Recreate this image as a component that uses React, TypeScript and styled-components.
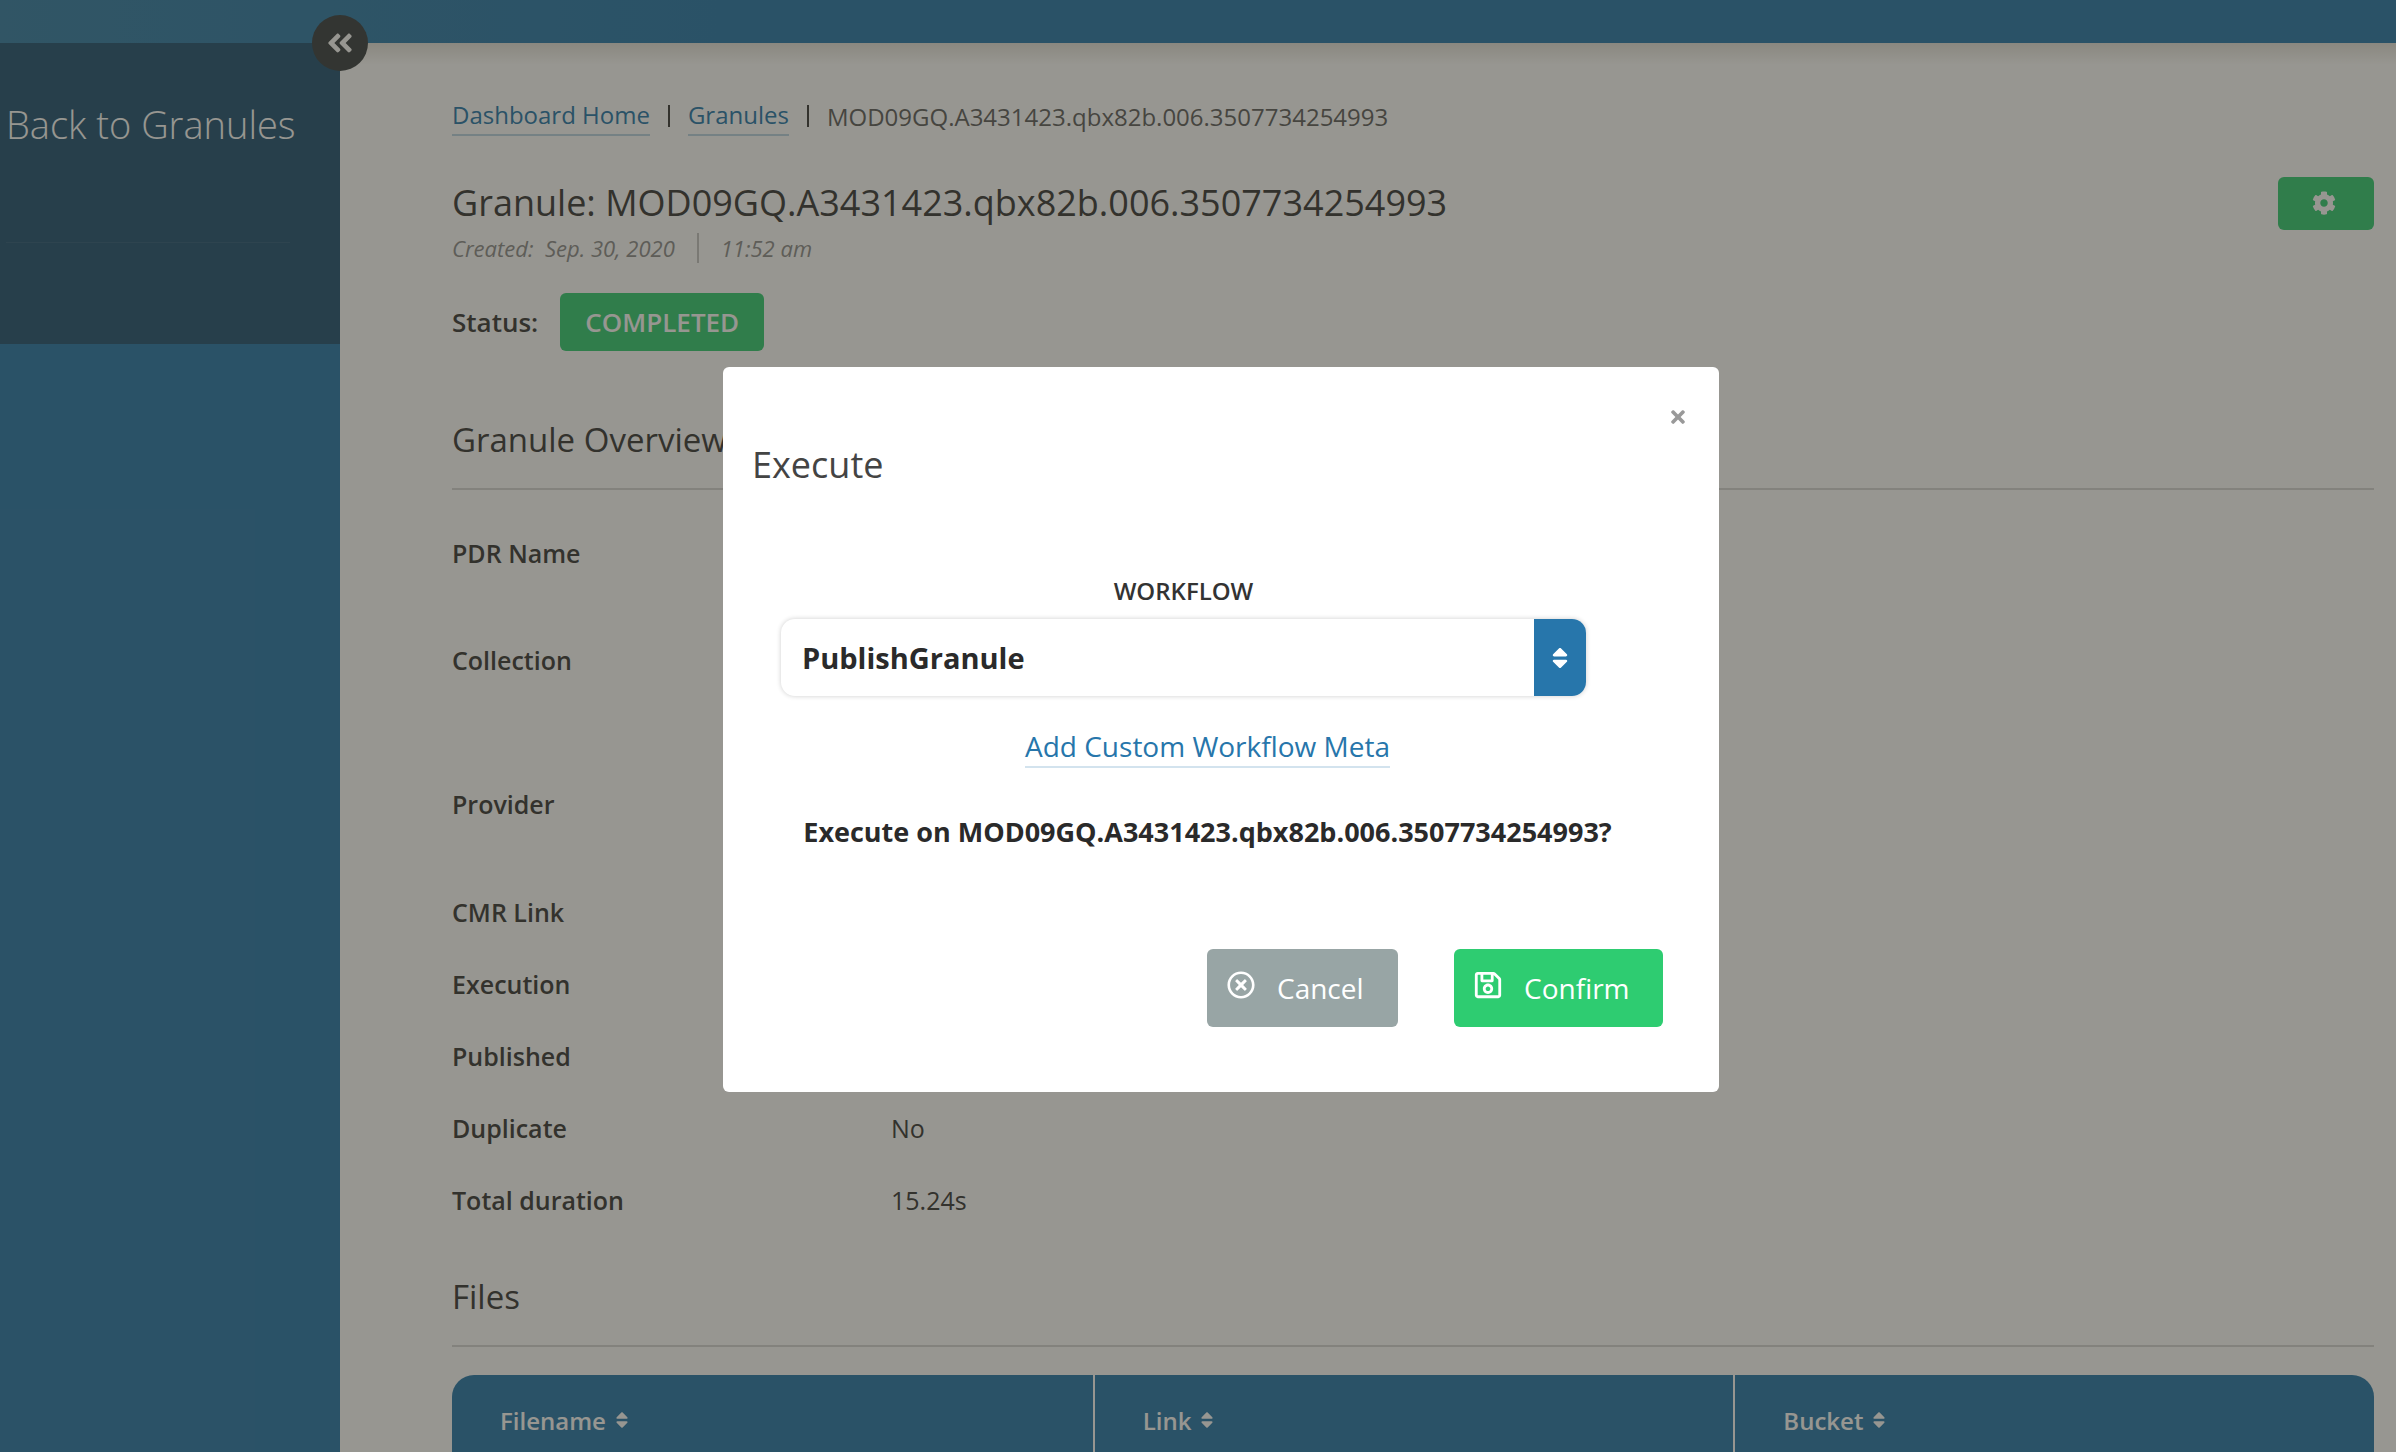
import styled, { createGlobalStyle } from "styled-components";
import {
  FaAngleDoubleLeft,
  FaCog,
  FaRegSave,
  FaRegTimesCircle,
  FaSort,
  FaTimes,
} from "react-icons/fa";

const GlobalStyle = createGlobalStyle`
  html, body {
    margin: 0;
    padding: 0;
    background: #ffffff;
  }
  * {
    box-sizing: border-box;
  }
  #root {
    height: 100vh;
    overflow: hidden;
    font-family: "Open Sans", "Liberation Sans", sans-serif;
  }
`;

const overview = [
  { label: "PDR Name", height: 107 },
  { label: "Collection", height: 144 },
  { label: "Provider", height: 108 },
  { label: "CMR Link", height: 72 },
  { label: "Execution", height: 72 },
  { label: "Published", height: 72 },
  { label: "Duplicate", height: 72, value: "No" },
  { label: "Total duration", height: 72, value: "15.24s" },
];

const granuleId = "MOD09GQ.A3431423.qbx82b.006.3507734254993";

export default function App() {
  return (
    <>
      <GlobalStyle />
      <Page>
        <TopBar />
        <Body>
          <Sidebar>
            <SideCard>
              <BackTitle>Back to Granules</BackTitle>
            </SideCard>
          </Sidebar>
          <Main>
            <Breadcrumbs>
              <Crumb>Dashboard Home</Crumb>
              <CrumbBar />
              <Crumb>Granules</Crumb>
              <CrumbBar />
              <CrumbCurrent>{granuleId}</CrumbCurrent>
            </Breadcrumbs>

            <TitleRow>
              <Title>Granule: {granuleId}</Title>
              <GearButton>
                <FaCog />
              </GearButton>
            </TitleRow>
            <Created>
              <span>Created:&nbsp; Sep. 30, 2020</span>
              <CreatedBar />
              <span>11:52 am</span>
            </Created>

            <StatusRow>
              <StatusLabel>Status:</StatusLabel>
              <StatusBadge>COMPLETED</StatusBadge>
            </StatusRow>

            <Heading $top={65}>Granule Overview</Heading>
            <Overview>
              {overview.map((row) => (
                <OverviewRow key={row.label} $height={row.height}>
                  <RowLabel>{row.label}</RowLabel>
                  <RowValue>{row.value}</RowValue>
                </OverviewRow>
              ))}
            </Overview>

            <Heading $top={19}>Files</Heading>
            <FilesTable>
              {["Filename", "Link", "Bucket"].map((name) => (
                <HeadCell key={name}>
                  {name}
                  <SortIcon />
                </HeadCell>
              ))}
            </FilesTable>
          </Main>
        </Body>

        <CollapseButton>
          <FaAngleDoubleLeft />
        </CollapseButton>

        <Overlay />

        <Modal>
          <CloseButton>
            <FaTimes />
          </CloseButton>
          <ModalTitle>Execute</ModalTitle>
          <SelectBlock>
            <SelectLabel>WORKFLOW</SelectLabel>
            <Select>
              <SelectValue>PublishGranule</SelectValue>
              <SelectHandle>
                <FaSort />
              </SelectHandle>
            </Select>
          </SelectBlock>
          <MetaLinkRow>
            <MetaLink>Add Custom Workflow Meta</MetaLink>
          </MetaLinkRow>
          <Question>Execute on {granuleId}?</Question>
          <ModalActions>
            <ActionButton $bg="#98a5a5" $width={191}>
              <FaRegTimesCircle />
              Cancel
            </ActionButton>
            <ActionButton $bg="#2ecc71" $width={209}>
              <FaRegSave />
              Confirm
            </ActionButton>
          </ModalActions>
        </Modal>
      </Page>
    </>
  );
}

const Page = styled.div`
  position: relative;
  height: 100%;
  display: flex;
  flex-direction: column;
  overflow: hidden;
`;

const TopBar = styled.div`
  flex: none;
  height: 43px;
  background: linear-gradient(90deg, #2f7ba6 0%, #2275aa 30%, #2275aa 100%);
`;

const Body = styled.div`
  flex: 1;
  display: flex;
  min-height: 0;
`;

const Sidebar = styled.aside`
  flex: none;
  width: 340px;
  background: #2275aa;
`;

const SideCard = styled.div`
  height: 301px;
  padding: 55px 50px 0 6px;
  background: #1c4f70;
`;

const BackTitle = styled.div`
  padding-bottom: 92px;
  border-bottom: 1px solid #2a5878;
  font-size: 38px;
  line-height: 52px;
  font-weight: 300;
  color: #ffffff;
  white-space: nowrap;
`;

const Main = styled.main`
  flex: 1;
  min-width: 0;
  padding: 53px 22px 0 112px;
  background: linear-gradient(180deg, #e4e2dc 0, #ffffff 22px);
  color: #2a2a2a;
`;

const Breadcrumbs = styled.nav`
  display: flex;
  align-items: center;
  height: 40px;
  font-size: 24px;
`;

const Crumb = styled.a`
  color: #2275aa;
  line-height: 38px;
  border-bottom: 2px solid #b9d4e5;
`;

const CrumbBar = styled.span`
  width: 2px;
  height: 22px;
  margin: 0 18px;
  background: #333333;
`;

const CrumbCurrent = styled.span`
  color: #5b5b5b;
`;

const TitleRow = styled.div`
  display: flex;
  align-items: center;
  justify-content: space-between;
  margin-top: 44px;
  height: 46px;
`;

const Title = styled.h1`
  margin: 0;
  font-size: 36px;
  line-height: 46px;
  font-weight: 400;
  color: #333333;
`;

const GearButton = styled.div`
  display: flex;
  align-items: center;
  justify-content: center;
  width: 96px;
  height: 53px;
  padding-right: 4px;
  border-radius: 6px;
  background: #2ecc71;
  color: #ffffff;
  font-size: 24px;
`;

const Created = styled.div`
  display: flex;
  align-items: center;
  margin-top: 6px;
  height: 32px;
  font-size: 22px;
  font-style: italic;
  color: #8b8b8b;
`;

const CreatedBar = styled.span`
  width: 2px;
  height: 30px;
  margin: 0 22px;
  background: #c4c4c4;
`;

const StatusRow = styled.div`
  display: flex;
  align-items: center;
  gap: 22px;
  margin-top: 29px;
  height: 58px;
`;

const StatusLabel = styled.span`
  font-size: 26px;
  font-weight: 600;
  color: #333333;
`;

const StatusBadge = styled.span`
  display: flex;
  align-items: center;
  justify-content: center;
  width: 204px;
  height: 58px;
  border-radius: 6px;
  background: #2ecc71;
  color: #ffffff;
  font-size: 26px;
  font-weight: 600;
`;

const Heading = styled.h2<{ $top: number }>`
  margin: ${(p) => p.$top}px 0 0;
  padding-bottom: 24px;
  border-bottom: 2px solid #d6d6d6;
  font-size: 33px;
  line-height: 48px;
  font-weight: 400;
  color: #333333;
`;

const Overview = styled.div`
  margin-top: 45px;
`;

const OverviewRow = styled.div<{ $height: number }>`
  display: grid;
  grid-template-columns: 439px 1fr;
  height: ${(p) => p.$height}px;
  font-size: 25px;
  line-height: 36px;
`;

const RowLabel = styled.div`
  font-weight: 600;
  color: #333333;
`;

const RowValue = styled.div`
  color: #333333;
`;

const FilesTable = styled.div`
  display: grid;
  grid-template-columns: repeat(3, 1fr);
  margin-top: 28px;
  height: 90px;
  border-top-left-radius: 22px;
  border-top-right-radius: 22px;
  background: #2275aa;
  overflow: hidden;
`;

const HeadCell = styled.div`
  display: flex;
  align-items: center;
  gap: 8px;
  padding-left: 48px;
  border-left: 2px solid #ffffff;
  font-size: 24px;
  font-weight: 600;
  color: #ffffff;

  &:first-child {
    border-left: none;
  }
`;

const SortIcon = styled(FaSort)`
  width: 16px;
  height: 20px;
`;

const CollapseButton = styled.div`
  position: absolute;
  left: 312px;
  top: 15px;
  display: flex;
  align-items: center;
  justify-content: center;
  width: 56px;
  height: 56px;
  border-radius: 50%;
  background: #333a3d;
  color: #ffffff;
  font-size: 30px;
`;

const Overlay = styled.div`
  position: absolute;
  inset: 0;
  background: rgba(51, 49, 39, 0.51);
`;

const Modal = styled.section`
  position: absolute;
  left: 723px;
  top: 367px;
  width: 996px;
  height: 725px;
  padding: 72px 56px 0 29px;
  border-radius: 6px;
  background: #ffffff;
  color: #2a2a2a;
`;

const CloseButton = styled.div`
  position: absolute;
  top: 40px;
  right: 31px;
  display: flex;
  color: #999999;
  font-size: 20px;
`;

const ModalTitle = styled.h3`
  margin: 0;
  font-size: 36px;
  line-height: 52px;
  font-weight: 400;
  color: #444444;
`;

const SelectBlock = styled.div`
  width: 805px;
  margin: 83px 0 0 29px;
`;

const SelectLabel = styled.div`
  font-size: 24px;
  line-height: 34px;
  font-weight: 600;
  text-align: center;
  color: #333333;
`;

const Select = styled.div`
  display: flex;
  align-items: stretch;
  height: 77px;
  margin-top: 11px;
  border-radius: 14px;
  background: #ffffff;
  box-shadow: 0 0 5px rgba(0, 0, 0, 0.2);
  overflow: hidden;
`;

const SelectValue = styled.div`
  flex: 1;
  display: flex;
  align-items: center;
  padding-left: 21px;
  font-size: 29px;
  font-weight: 700;
  color: #2a2a2a;
`;

const SelectHandle = styled.div`
  flex: none;
  display: flex;
  align-items: center;
  justify-content: center;
  width: 52px;
  background: #2776ab;
  color: #ffffff;
  font-size: 26px;
`;

const MetaLinkRow = styled.div`
  display: flex;
  justify-content: center;
  margin: 30px 0 0;
`;

const MetaLink = styled.a`
  font-size: 28px;
  line-height: 40px;
  color: #2776ab;
  border-bottom: 2px solid #d3e3ee;
`;

const Question = styled.p`
  margin: 45px 0 0;
  font-size: 27px;
  line-height: 38px;
  font-weight: 700;
  text-align: center;
  color: #2a2a2a;
`;

const ModalActions = styled.div`
  display: flex;
  justify-content: flex-end;
  gap: 56px;
  margin-top: 98px;
`;

const ActionButton = styled.button<{ $bg: string; $width: number }>`
  display: flex;
  align-items: center;
  gap: 22px;
  width: ${(p) => p.$width}px;
  height: 78px;
  padding: 0 0 0 20px;
  border: none;
  border-radius: 6px;
  background: ${(p) => p.$bg};
  color: #ffffff;
  font-family: inherit;
  font-size: 28px;

  svg {
    width: 28px;
    height: 30px;
    margin-top: -6px;
  }
`;
